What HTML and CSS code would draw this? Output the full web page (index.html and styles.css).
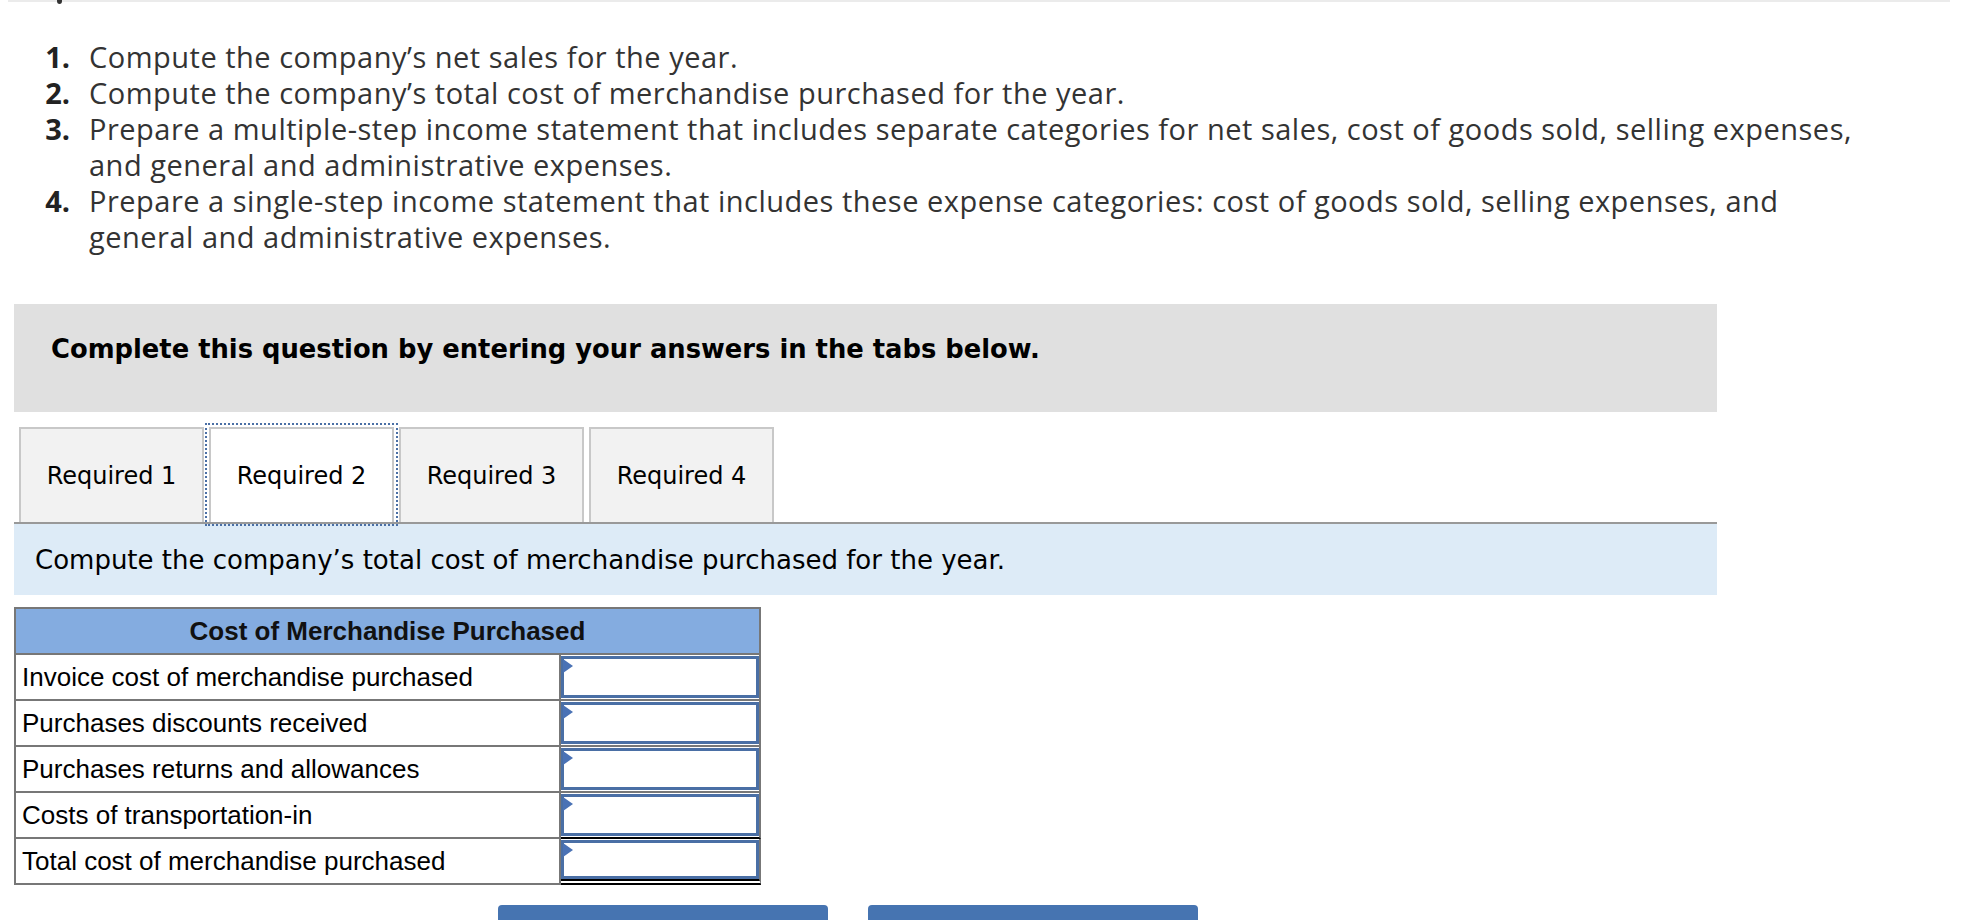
FILE: index.html
```html
<!DOCTYPE html>
<html lang="en">
<head>
<meta charset="utf-8">
<title>Cost of Merchandise Purchased</title>
<link rel="stylesheet" href="styles.css">
</head>
<body>
<div class="topbar"><span class="dot"></span></div>
<ol class="reqs">
  <li><span class="num">1.</span><span>Compute the company’s net sales for the year.</span></li>
  <li><span class="num">2.</span><span>Compute the company’s total cost of merchandise purchased for the year.</span></li>
  <li><span class="num">3.</span><span>Prepare a multiple-step income statement that includes separate categories for net sales, cost of goods sold, selling expenses, and general and administrative expenses.</span></li>
  <li><span class="num">4.</span><span>Prepare a single-step income statement that includes these expense categories: cost of goods sold, selling expenses, and general and administrative expenses.</span></li>
</ol>
<div class="panel">
  <div class="instructions">Complete this question by entering your answers in the tabs below.</div>
  <div class="tabs">
    <button class="tab">Required 1</button>
    <button class="tab active">Required 2</button>
    <button class="tab">Required 3</button>
    <button class="tab">Required 4</button>
  </div>
  <div class="prompt">Compute the company’s total cost of merchandise purchased for the year.</div>
  <table class="cmp">
    <thead>
      <tr><th colspan="2">Cost of Merchandise Purchased</th></tr>
    </thead>
    <tbody>
      <tr><td class="label">Invoice cost of merchandise purchased</td><td class="inp"><div class="box"></div></td></tr>
      <tr><td class="label">Purchases discounts received</td><td class="inp"><div class="box"></div></td></tr>
      <tr><td class="label">Purchases returns and allowances</td><td class="inp"><div class="box"></div></td></tr>
      <tr><td class="label">Costs of transportation-in</td><td class="inp sub"><div class="box"></div></td></tr>
      <tr><td class="label">Total cost of merchandise purchased</td><td class="inp total"><div class="box"></div></td></tr>
    </tbody>
  </table>
  <div class="nav">
    <button class="navbtn"></button>
    <button class="navbtn"></button>
  </div>
</div>
</body>
</html>
```
FILE: styles.css
```css
html, body {
  margin: 0;
  padding: 0;
  background: #fff;
}
body {
  font-family: "Open Sans", Lato, sans-serif;
  color: #333;
  overflow: hidden;
}
.topbar {
  position: relative;
  margin-left: 8px;
  width: 1942px;
  height: 2px;
  background: #ebebeb;
}
.topbar .dot {
  position: absolute;
  left: 49px;
  top: -2px;
  width: 5px;
  height: 6px;
  border-radius: 50%;
  background: #333;
}
.reqs {
  list-style: none;
  margin: 37px 0 49px 0;
  padding: 0;
  width: 1880px;
  font-size: 29px;
  letter-spacing: 0.5px;
  line-height: 36px;
  color: #333;
}
.reqs li {
  display: grid;
  grid-template-columns: 70px 1fr;
  column-gap: 19px;
}
.reqs .num {
  text-align: right;
  font-weight: 700;
  letter-spacing: 0;
  color: #222;
}
.panel {
  margin-left: 14px;
  width: 1703px;
}
.instructions {
  box-sizing: border-box;
  height: 108px;
  padding: 30px 37px 0;
  background: #e0e0e0;
  font-family: "DejaVu Sans", Verdana, sans-serif;
  font-weight: 700;
  font-size: 25.8px;
  line-height: 30px;
  color: #000;
}
.tabs {
  display: flex;
  gap: 5px;
  padding: 15px 0 0 5px;
  border-bottom: 2px solid #999;
}
.tab {
  box-sizing: border-box;
  width: 185px;
  height: 95px;
  margin: 0;
  padding: 0;
  border: 2px solid #c8c8c8;
  border-bottom: none;
  background: #f2f2f2;
  font-family: "DejaVu Sans", Verdana, sans-serif;
  font-size: 24px;
  color: #000;
  display: flex;
  align-items: center;
  justify-content: center;
}
.tab.active {
  background: #fff;
  outline: 2px dotted #4a6fa5;
  outline-offset: 2px;
}
.prompt {
  box-sizing: border-box;
  height: 71px;
  padding: 21px 21px 0;
  background: #ddebf7;
  font-family: "DejaVu Sans", Verdana, sans-serif;
  font-size: 26px;
  line-height: 30px;
  color: #000;
}
.cmp {
  margin-top: 12px;
  border-collapse: separate;
  border-spacing: 0;
  border-top: 2px solid #777;
  border-left: 2px solid #777;
  font-family: "Liberation Sans", Arial, sans-serif;
  font-size: 26px;
  color: #000;
}
.cmp th, .cmp td {
  border-right: 2px solid #777;
  border-bottom: 2px solid #777;
  padding: 0;
}
.cmp th {
  height: 44px;
  background: #84ace0;
  font-weight: 700;
  text-align: center;
  line-height: 44px;
  color: #111;
}
.cmp td.label {
  width: 537px;
  height: 44px;
  padding: 0 0 0 6px;
  line-height: 44px;
  text-align: left;
  white-space: nowrap;
}
.cmp td.inp {
  width: 198px;
  padding: 1px 0 1px 0;
  vertical-align: top;
}
.cmp td.sub {
  border-bottom-color: #000;
}
.cmp td.total {
  border-bottom: 6px double #000;
  padding-bottom: 0;
}
.box {
  position: relative;
  box-sizing: border-box;
  height: 42px;
  border: 3px solid #4a6fa5;
  background: #fff;
}
.total .box {
  height: 39px;
}
.box::before {
  content: "";
  position: absolute;
  left: -1px;
  top: 0;
  width: 0;
  height: 0;
  border-top: 7px solid transparent;
  border-bottom: 7px solid transparent;
  border-left: 10px solid #4a72b5;
}
.nav {
  display: flex;
  gap: 40px;
  margin: 20px 0 0 484px;
}
.navbtn {
  width: 330px;
  height: 50px;
  border: none;
  border-radius: 4px;
  background: #4674b1;
}
```
